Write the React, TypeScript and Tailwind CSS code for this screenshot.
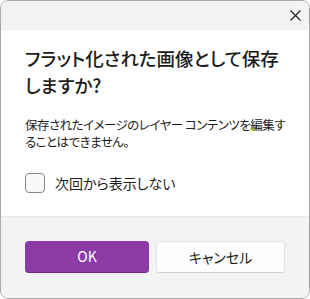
import React, { useState } from 'react';

export default function App() {
  const [noShow, setNoShow] = useState(false);

  return (
    <div
      className="w-[310px] h-[299px] overflow-hidden rounded-[8px] border border-[#a9a9a9] bg-white flex flex-col text-[#1b1b1b]"
      style={{ fontFamily: '"Noto Sans CJK JP", "Noto Sans", sans-serif' }}
    >
      {/* Title bar */}
      <div className="h-[29px] shrink-0 bg-[#f3f3f3] flex items-center justify-end">
        <button className="w-[28px] h-[28px] flex items-center justify-center text-[#1b1b1b]">
          <svg width="11" height="11" viewBox="0 0 11 11" fill="none" stroke="currentColor" strokeWidth="1.1">
            <path d="M0.5 0.5 L10.5 10.5 M10.5 0.5 L0.5 10.5" />
          </svg>
        </button>
      </div>

      {/* Content */}
      <div className="flex-1 pl-[24px] pr-[20px] pt-[15px] [font-feature-settings:'palt']">
        <h1 className="text-[18.5px] leading-[27px] font-medium whitespace-nowrap">
          フラット化された画像として保存
          <br />
          しますか?
        </h1>
        <p className="mt-[17px] text-[12.5px] leading-[17px] tracking-[-0.5px]">
          保存されたイメージのレイヤー コンテンツを編集することはできません。
        </p>
        <label className="mt-[23px] flex items-center gap-[10px] cursor-pointer">
          <button
            onClick={() => setNoShow(!noShow)}
            className="w-[20px] h-[20px] rounded-[4px] border border-[#8a8a8a] bg-[#f9f9f9] shrink-0"
          />
          <span className="text-[14px] leading-[20px]">次回から表示しない</span>
        </label>
      </div>

      {/* Footer */}
      <div className="h-[82px] shrink-0 bg-[#f3f3f3] border-t border-[#e8e8e8] flex gap-[7px] px-[24px] pt-[24px]">
        <button className="w-[125px] h-[32px] rounded-[4px] bg-[#8b3aa6] border-b border-[#6c2a84] text-white text-[14px]">
          OK
        </button>
        <button className="w-[130px] h-[32px] rounded-[4px] bg-[#fdfdfd] border border-[#e3e3e3] border-b-[#d0d0d0] text-[14px] [font-feature-settings:'palt']">
          キャンセル
        </button>
      </div>
    </div>
  );
}
